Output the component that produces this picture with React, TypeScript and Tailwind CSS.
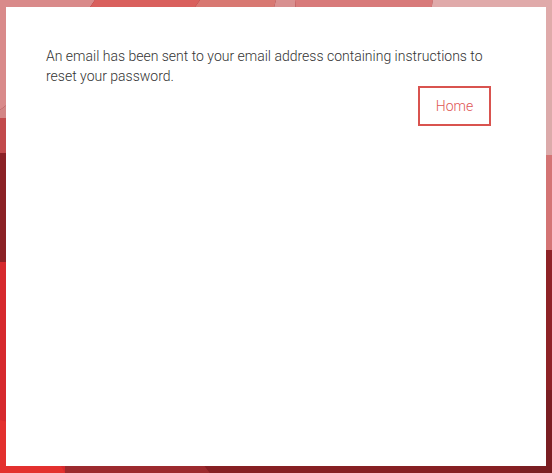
import React from "react";

function Background() {
  return (
    <svg
      className="absolute inset-0"
      width="552"
      height="473"
      viewBox="0 0 552 473"
      xmlns="http://www.w3.org/2000/svg"
    >
      <rect x="0" y="0" width="552" height="473" fill="#8c2226" />
      {/* top region */}
      <polygon points="0,0 95,0 40,80 0,110" fill="#d98a8a" />
      <polygon points="95,0 200,0 150,70 40,80" fill="#d9605d" />
      <polygon points="200,0 276,0 260,60 150,70" fill="#d87872" />
      <polygon points="276,0 295,0 300,60 260,60" fill="#d89090" />
      <polygon points="295,0 433,0 420,70 300,60" fill="#d87a7a" />
      <polygon points="433,0 552,0 552,150 420,70" fill="#e0aaaa" />
      {/* left side */}
      <polygon points="0,110 40,80 20,118 0,118" fill="#d38585" />
      <polygon points="0,118 20,118 30,153 0,153" fill="#c24a4c" />
      <polygon points="0,153 30,153 25,262 0,262" fill="#8b2126" />
      <polygon points="0,262 25,262 70,473 0,473" fill="#d6292d" />
      <polygon points="0,420 40,430 65,473 0,473" fill="#e3302e" />
      {/* right side */}
      <polygon points="552,150 520,155 520,250 552,250" fill="#d47474" />
      <polygon points="520,100 552,100 552,155 520,155" fill="#dcaaaa" />
      <polygon points="520,250 552,250 552,390 520,390" fill="#8e2226" />
      <polygon points="520,390 552,390 552,473 520,473" fill="#7a1e22" />
      {/* bottom */}
      <polygon points="65,460 200,460 210,473 65,473" fill="#9c2a2e" />
      <polygon points="200,460 520,460 520,473 210,473" fill="#861f23" />
    </svg>
  );
}

export default function App() {
  return (
    <div
      className="relative w-[552px] h-[473px] overflow-hidden"
      style={{ fontFamily: "Roboto, 'Liberation Sans', sans-serif" }}
    >
      <Background />
      <div className="relative ml-[6px] mt-[7px] w-[540px] h-[459px] bg-white pl-[40px] pr-[55px] pt-[39px]">
        <p className="text-[14px] leading-[20px] font-light text-[#333333]">
          An email has been sent to your email address containing instructions to reset your password.
        </p>
        <div className="flex justify-end">
          <button className="w-[73px] h-[40px] border-2 border-[#d9534f] text-[14px] font-light text-[#e05555] bg-white">
            Home
          </button>
        </div>
      </div>
    </div>
  );
}
